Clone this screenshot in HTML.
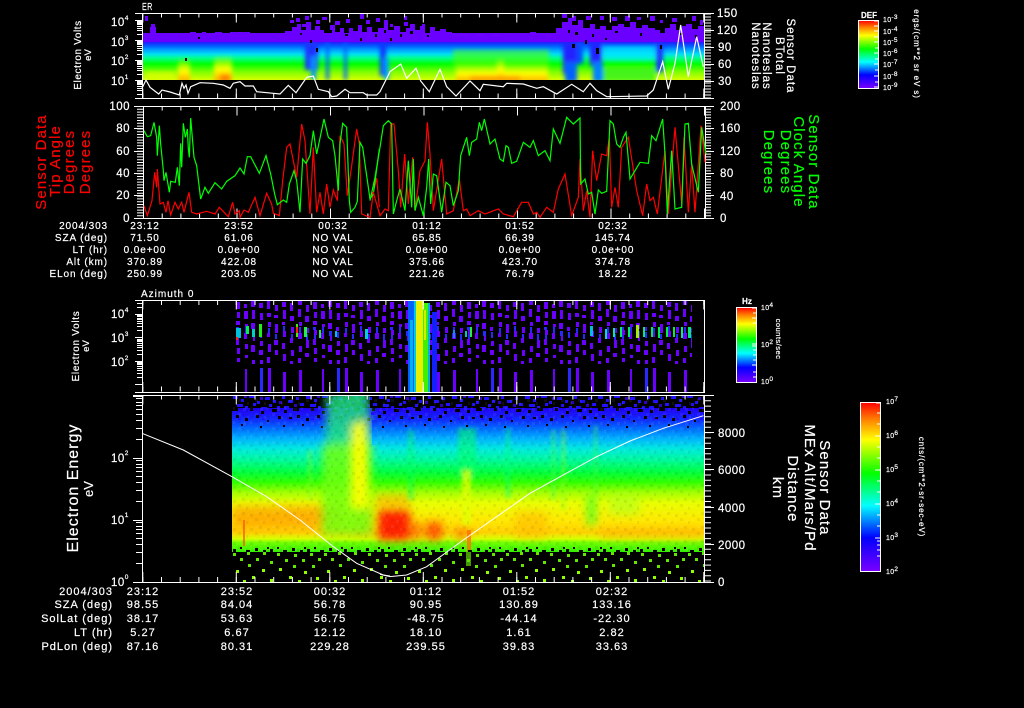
<!DOCTYPE html>
<html><head><meta charset="utf-8"><title>Sensor Data</title>
<style>
html,body{margin:0;padding:0;background:#000;width:1024px;height:708px;overflow:hidden}
svg{display:block}
text{fill:#fff;stroke:#fff;stroke-width:.2px;font-family:"Liberation Sans",sans-serif}
.s{font-size:10px;letter-spacing:.9px}
.b{font-size:11px;letter-spacing:1px}
.a{font-size:11.5px;letter-spacing:.5px}
.e{font-size:6.5px}
.c{font-size:7px;letter-spacing:.3px}
.l{font-size:15px;letter-spacing:1.1px}
text.r{fill:#ff0000;stroke:#ff0000}text.g{fill:#00ff00;stroke:#00ff00}
.w{stroke:#fff;fill:none;shape-rendering:crispEdges}
</style></head><body>
<svg width="1024" height="708" viewBox="0 0 1024 708" xmlns="http://www.w3.org/2000/svg">
<defs>
<linearGradient id="cb" x1="0" y1="0" x2="0" y2="1">
<stop offset="0" stop-color="#ff0000"/><stop offset=".1" stop-color="#ff8000"/><stop offset=".22" stop-color="#ffff00"/><stop offset=".42" stop-color="#00ff00"/><stop offset=".61" stop-color="#00ffff"/><stop offset=".8" stop-color="#0000ff"/><stop offset="1" stop-color="#7a00ff"/>
</linearGradient>
<linearGradient id="p1" gradientUnits="userSpaceOnUse" x1="0" y1="33" x2="0" y2="80">
<stop offset="0" stop-color="#6a00ff"/><stop offset=".16" stop-color="#6a10ff"/><stop offset=".2" stop-color="#2020ff"/><stop offset=".28" stop-color="#0060ff"/><stop offset=".36" stop-color="#00a0ff"/><stop offset=".45" stop-color="#00e0f0"/><stop offset=".53" stop-color="#00ff90"/><stop offset=".66" stop-color="#00ff00"/><stop offset=".83" stop-color="#80ff00"/><stop offset="1" stop-color="#d8ff00"/>
</linearGradient>
<linearGradient id="p4" gradientUnits="userSpaceOnUse" x1="0" y1="395" x2="0" y2="552">
<stop offset="0" stop-color="#1a10e0"/><stop offset=".085" stop-color="#2000f0"/><stop offset=".16" stop-color="#1030ff"/><stop offset=".216" stop-color="#0070ff"/><stop offset=".275" stop-color="#00b0ff"/><stop offset=".34" stop-color="#00e8e0"/><stop offset=".41" stop-color="#00f8a0"/><stop offset=".49" stop-color="#00ff40"/><stop offset=".555" stop-color="#30ff00"/><stop offset=".62" stop-color="#a0ff00"/><stop offset=".686" stop-color="#e8ff00"/><stop offset=".8" stop-color="#ffe800"/><stop offset=".875" stop-color="#ffd000"/><stop offset=".915" stop-color="#d8ff00"/><stop offset=".94" stop-color="#70ff00"/><stop offset="1" stop-color="#30f000"/>
</linearGradient>
<linearGradient id="hotv" x1="0" y1="0" x2="0" y2="1"><stop offset="0" stop-color="#ffff00" stop-opacity="0"/><stop offset=".55" stop-color="#ffff00"/><stop offset="1" stop-color="#ffa000"/></linearGradient>
<filter id="bl1" x="-50%" y="-50%" width="200%" height="200%"><feGaussianBlur stdDeviation="2.2"/></filter>
<filter id="bl3" x="-50%" y="-50%" width="200%" height="200%"><feGaussianBlur stdDeviation="4.5"/></filter>
<clipPath id="c1"><rect x="143" y="14" width="561" height="66"/></clipPath>
<clipPath id="c4"><rect x="232" y="396" width="472" height="156"/></clipPath>
<pattern id="topS" patternUnits="userSpaceOnUse" x="232" y="395" width="73" height="30">
<path fill="#2010ff" d="M1 1h5v3h-5zM9 4h3v3h-3zM17 0h6v3h-6zM25 6h3v3h-3zM33 2h5v3h-5zM41 5h3v3h-3zM5 9h6v3h-6zM13 11h3v3h-3zM21 8h3v3h-3zM29 12h6v3h-6zM37 9h3v3h-3zM45 11h3v3h-3zM2 15h3v3h-3zM10 18h6v3h-6zM18 15h3v3h-3zM26 19h3v3h-3zM34 16h6v3h-6zM42 18h3v3h-3zM6 23h3v3h-3zM14 22h3v3h-3zM22 25h6v3h-6zM30 23h3v3h-3zM38 26h3v3h-3zM46 24h2v3h-2zM50 1h3v3h-3zM56 5h5v3h-5zM64 2h3v3h-3zM68 8h4v3h-4zM52 11h5v3h-5zM60 14h3v3h-3zM66 17h5v3h-5zM49 19h3v3h-3zM55 22h6v3h-6zM63 25h3v3h-3z"/>
<path fill="#3000c0" d="M12 0h3v3h-3zM47 6h3v3h-3zM62 9h3v3h-3zM28 2h3v3h-3z"/>
</pattern>
<pattern id="blk" patternUnits="userSpaceOnUse" x="232" y="408" width="61" height="24">
<path fill="#000" d="M0 0h6v3h-6zM18 0h3v3h-3zM29 3h3v3h-3zM40 1h5v3h-5zM52 2h3v3h-3zM4 7h3v3h-3zM24 7h3v3h-3zM46 8h3v3h-3zM57 9h3v2h-3zM13 10h3v3h-3zM35 12h2v2h-2zM9 16h2v2h-2zM28 18h2v2h-2zM51 17h2v2h-2z"/>
</pattern>
<pattern id="grn" patternUnits="userSpaceOnUse" x="232" y="552" width="91" height="31">
<path fill="#60e800" d="M1 1h3v3h-3zM15 0h3v3h-3zM31 0h3v3h-3zM45 1h3v3h-3zM62 2h3v3h-3zM78 1h3v3h-3zM8 6h3v3h-3zM24 6h3v3h-3zM53 7h3v3h-3zM70 7h3v3h-3zM86 6h3v3h-3zM38 9h3v3h-3zM16 12h3v3h-3zM61 13h3v3h-3zM80 13h3v3h-3z"/>
<path fill="#90ff00" d="M4 18h3v3h-3zM30 17h3v3h-3zM47 16h3v3h-3zM72 19h3v3h-3zM20 24h3v3h-3zM57 24h3v3h-3zM38 27h3v4h-3zM84 25h3v3h-3zM11 28h3v3h-3zM66 28h3v3h-3z"/>
</pattern>
<pattern id="blk2" patternUnits="userSpaceOnUse" x="232" y="544" width="37" height="8">
<path fill="#000" d="M1 5h3v3h-3zM8 3h2v2h-2zM14 6h4v2h-4zM23 4h3v3h-3zM31 6h3v2h-3zM35 3h2v2h-2z"/>
</pattern>
<pattern id="tx" patternUnits="userSpaceOnUse" width="17" height="14">
<path fill="#000" fill-opacity=".06" d="M0 0h3v3h-3zM8 3h2v3h-2zM4 8h3v3h-3zM12 10h3v3h-3z"/><path fill="#fff" fill-opacity=".06" d="M5 2h3v3h-3zM12 1h2v3h-2zM0 7h3v3h-3zM9 10h2v3h-2z"/>
</pattern>
<pattern id="col" patternUnits="userSpaceOnUse" x="236" y="300" width="77" height="92">
<path fill="#6a00ff" d="M0 2h4v7h-4zM1 12h3v6h-3zM0 21h4v4h-4zM1 30h3v5h-3zM0 39h3v6h-3zM1 48h3v6h-3zM1 58h3v4h-3z
M8 4h3v4h-3zM8 11h4v8h-4zM9 24h3v3h-3zM8 33h3v6h-3zM9 44h3v5h-3zM9 55h3v3h-3zM9 69h2v23h-2z
M15 1h4v6h-4zM16 10h3v9h-3zM15 23h4v6h-4zM17 36h2v5h-2zM15 45h4v7h-4zM16 60h3v4h-3z
M23 3h4v5h-4zM24 13h3v7h-3zM23 27h3v4h-3zM24 41h3v5h-3zM23 50h4v5h-4zM24 60h3v4h-3z
M31 1h3v8h-3zM31 13h4v4h-4zM32 22h3v5h-3zM31 33h3v4h-3zM32 44h3v8h-3zM31 57h3v6h-3zM32 68h3v24h-3z
M39 5h3v6h-3zM38 15h4v3h-4zM39 24h3v9h-3zM38 40h4v5h-4zM39 50h3v5h-3z
M46 2h4v5h-4zM47 10h3v9h-3zM46 22h3v3h-3zM47 31h3v6h-3zM46 43h3v6h-3zM47 54h3v7h-3zM47 72h3v20h-3z
M54 3h3v8h-3zM54 16h4v5h-4zM55 27h3v6h-3zM54 38h3v5h-3zM55 50h3v6h-3zM54 61h3v3h-3z
M62 1h4v4h-4zM62 9h3v8h-3zM63 22h3v4h-3zM62 33h4v6h-4zM63 46h3v6h-3zM62 58h3v5h-3zM63 70h3v22h-3z
M70 5h3v7h-3zM69 16h4v6h-4zM70 28h3v5h-3zM70 40h3v8h-3zM69 53h4v4h-4z"/>
<path fill="#2828ff" d="M0 27h3v3h-3zM1 35h2v4h-2zM9 27h2v6h-2zM16 31h3v5h-3zM24 32h2v6h-2zM32 28h2v5h-2zM39 34h2v5h-2zM47 26h2v5h-2zM55 34h2v4h-2zM63 27h2v6h-2zM70 34h2v6h-2zM24 68h3v24h-3z"/>
</pattern>
</defs>
<rect width="1024" height="708" fill="#000"/>

<!-- panel 1 spectrogram -->
<g clip-path="url(#c1)">
<rect x="143" y="33" width="561" height="47" fill="url(#p1)"/>
<g filter="url(#bl1)">
<rect x="145" y="72" width="30" height="8" fill="#e0ff00" opacity=".7"/>
<rect x="178" y="58" width="12" height="24" fill="url(#hotv)"/>
<rect x="214" y="55" width="18" height="27" fill="url(#hotv)"/>
<rect x="220" y="74" width="10" height="8" fill="#ff8000"/>
<rect x="453" y="50" width="96" height="20" fill="#50ff00" opacity=".6"/>
<rect x="456" y="64" width="92" height="18" fill="url(#hotv)"/>
<rect x="497" y="58" width="7" height="24" fill="url(#hotv)"/>
<rect x="470" y="76" width="50" height="5" fill="#ff9000" opacity=".8"/>
<rect x="603" y="46" width="52" height="14" fill="#00e8ff" opacity=".7"/>
<rect x="603" y="68" width="52" height="14" fill="#30f020" opacity=".8"/>
<rect x="305" y="42" width="13" height="28" fill="#1a30ff"/>
<rect x="311" y="56" width="5" height="24" fill="#0090ff"/>
<rect x="326" y="42" width="3" height="38" fill="#0060ff"/>
<rect x="344" y="42" width="3" height="38" fill="#0060ff"/>
<rect x="380" y="42" width="6" height="34" fill="#1030ff"/>
<rect x="384" y="58" width="5" height="22" fill="#00a0ff"/>
<rect x="563" y="42" width="14" height="32" fill="#2020ff"/>
<rect x="565" y="62" width="12" height="20" fill="#0060ff"/>
<rect x="577" y="42" width="6" height="22" fill="#0050ff"/>
<rect x="590" y="42" width="12" height="24" fill="#2020ff"/>
<rect x="593" y="62" width="10" height="20" fill="#0080ff"/>
<rect x="656" y="42" width="7" height="30" fill="#1a30ff"/>
</g>
<path fill="#6a00ff" d="M143 42V35H150V27H156V33H162V35H190V32H196V35H202V32H206V35H215V32H222V35H230V32H250V35H258V33H270V35H275V33H285V31H292V27H297V24H301V30H306V22H311V30H315V26H320V30H324V33H330V25H335V32H340V28H344V33H349V28H353V31H358V25H362V32H367V27H372V32H378V28H384V24H388V30H394V26H400V32H406V28H410V24H415V30H420V26H425V33H430V27H435V31H440V29H446V32H452V36H470V34H475V36H485V34H492V36H500V33H505V35H514V33H520V35H530V32H536V35H545V36H550V33H556V28H562V22H568V18H572V25H578V20H583V28H590V24H595V29H600V26H606V30H612V26H618V24H624V27H630V22H636V28H642V25H648V28H655V30H660V33H665V28H670V24H676V30H682V26H686V24H692V29H698V26H704V42Z"/>
<path fill="#6a00ff" d="M145 16h3v5h-3zM151 24h4v4h-4zM290 20h4v3h-4zM296 18h4v4h-4zM305 16h4v4h-4zM302 24h4v3h-4zM316 20h4v4h-4zM322 17h5v3h-5zM335 21h5v4h-5zM346 19h4v4h-4zM360 14h4v5h-4zM366 20h4v4h-4zM376 18h4v4h-4zM384 20h4v4h-4zM390 24h3v3h-3zM404 16h3v4h-3zM404 22h4v4h-4zM422 24h3v3h-3zM562 14h5v4h-5zM572 16h4v5h-4zM586 16h5v4h-5zM600 16h4v4h-4zM612 17h5v4h-5zM625 16h5v5h-5zM637 17h4v3h-4zM650 16h5v5h-5zM660 20h3v3h-3zM672 18h5v4h-5zM692 16h4v5h-4zM700 20h3v5h-3z"/>
<path fill="#000" d="M185 58h2v3h-2zM310 40h2v3h-2zM316 48h2v4h-2zM360 38h2v3h-2zM384 30h2v3h-2zM568 30h2v3h-2zM572 44h3v4h-3zM585 40h2v4h-2zM596 48h3v6h-3zM605 38h2v2h-2zM660 45h2v4h-2zM390 38h2v3h-2zM400 34h2v3h-2zM300 33h2v2h-2zM330 30h2v3h-2zM345 34h3v2h-3zM375 34h2v3h-2zM410 31h3v3h-3zM427 35h2v2h-2zM575 32h3v3h-3zM592 34h2v3h-2zM615 31h3v2h-3zM640 33h2v3h-2zM680 33h3v2h-3zM695 35h2v3h-2zM198 37h2v2h-2z"/>
</g>

<!-- panel 1 axes -->
<path class="w" d="M135 13.5H714M135 98.5H714M142.5 13V99M704.5 13V99"/>
<path class="w" d="M135 80.5H142M135 60.5H142M135 40.5H142M135 20.5H142M137 74.5H142M137 70.5H142M137 68.5H142M137 66.5H142M137 64.5H142M137 63.5H142M137 62.5H142M137 61.5H142M137 54.5H142M137 50.5H142M137 48.5H142M137 46.5H142M137 44.5H142M137 43.5H142M137 42.5H142M137 41.5H142M137 34.5H142M137 30.5H142M137 28.5H142M137 26.5H142M137 24.5H142M137 23.5H142M137 22.5H142M137 21.5H142M137 94.5H142M137 90.5H142M137 88.5H142M137 86.5H142M137 84.5H142M137 83.5H142M137 82.5H142M137 81.5H142"/>
<line x1="708" y1="13.5" x2="708" y2="98" stroke="#fff" stroke-width="6" stroke-dasharray="1 2"/>
<path class="w" d="M704 13.5H714M704 30.5H714M704 47.5H714M704 64.5H714M704 81.5H714M704 98.5H714"/>
<g stroke="#fff">
<line x1="142.3" y1="15.5" x2="704" y2="15.5" stroke-width="4" stroke-dasharray="1 17.7"/>
<line x1="142.3" y1="96" x2="704" y2="96" stroke-width="5" stroke-dasharray="1 17.7"/>
<line x1="142.3" y1="18" x2="704" y2="18" stroke-width="9" stroke-dasharray="1 92.5"/>
<line x1="142.3" y1="93.5" x2="704" y2="93.5" stroke-width="10" stroke-dasharray="1 92.5"/>
</g>
<polyline fill="none" stroke="#fff" stroke-width="1.2" points="142,88.3 146,80 150,87.3 158.7,94 162,90 170,92 179.3,95 182,83.3 184,88.3 186,85 188,93.3 190.7,86.7 200,82.7 213.3,83.3 223.3,85 230,88.3 233.3,83.3 240,81.7 245,86 253.3,86 256.7,91.7 273.3,93.3 280,94 288.3,85.3 296,92.7 306.7,77.3 313.3,76 318.3,89.3 328.3,91.7 331.7,96.7 336.7,96 345,89.3 350,92.7 363.3,92.7 366.7,95 376.7,95 380,91.7 390,71.7 400.7,64 406.7,78.3 416,68.3 420.7,81 429.3,91.7 440,69.3 446.7,86.7 456,96 470,81 480,90.7 483.3,84.3 503.3,86.7 506.7,83.3 523.3,84 536.7,88.3 543.3,86.7 556.7,94 571.7,84.3 583.3,91.7 590,83.3 596.7,90.7 606.7,96.7 646.7,96 653.3,90 662.7,61.7 668.3,89.3 675,63.3 680.7,25 688.3,76.7 696.7,36.7 703.3,66.7"/>
<text x="142" y="10" class="s" textLength="11" lengthAdjust="spacingAndGlyphs">ER</text>
<g class="a">
<text x="111" y="26">10<tspan class="e" dy="-6">4</tspan></text>
<text x="111" y="46">10<tspan class="e" dy="-6">3</tspan></text>
<text x="111" y="65">10<tspan class="e" dy="-6">2</tspan></text>
<text x="111" y="85">10<tspan class="e" dy="-6">1</tspan></text>
<text x="717" y="17">150</text><text x="717" y="34">120</text><text x="718" y="51">90</text><text x="718" y="68">60</text><text x="718" y="85">30</text>
</g>
<text transform="translate(81,55) rotate(-90)" text-anchor="middle" font-size="10" letter-spacing=".6">Electron Volts</text>
<text transform="translate(91,55) rotate(-90)" text-anchor="middle" font-size="9.5">eV</text>
<text transform="translate(787,56) rotate(90)" text-anchor="middle" font-size="11.5" letter-spacing="1">Sensor Data</text>
<text transform="translate(776,56) rotate(90)" text-anchor="middle" font-size="11.5" letter-spacing="1">BTotal</text>
<text transform="translate(763,56) rotate(90)" text-anchor="middle" font-size="11.5" letter-spacing="1">Nanoteslas</text>
<text transform="translate(752,56) rotate(90)" text-anchor="middle" font-size="11.5" letter-spacing="1">Nanoteslas</text>

<!-- colorbar 1 -->
<rect x="858.5" y="20.5" width="20" height="68" fill="url(#cb)" stroke="#fff"/>
<path class="w" d="M874 21H878M874 26H878M874 31H878M874 37H878M874 42H878M875 48H878M874 53H878M875 59H878M874 64H878M875 70H878M874 76H878M875 82H878M874 87H878"/>
<text x="861" y="18" font-size="8.5" font-weight="bold" textLength="16" lengthAdjust="spacingAndGlyphs">DEF</text>
<g class="c">
<text x="883" y="22">10<tspan class="e" font-size="5" dy="-3">-3</tspan></text>
<text x="883" y="34">10<tspan class="e" dy="-3">-4</tspan></text>
<text x="883" y="45">10<tspan class="e" dy="-3">-5</tspan></text>
<text x="883" y="56">10<tspan class="e" dy="-3">-6</tspan></text>
<text x="883" y="67">10<tspan class="e" dy="-3">-7</tspan></text>
<text x="883" y="79">10<tspan class="e" dy="-3">-8</tspan></text>
<text x="883" y="90">10<tspan class="e" dy="-3">-9</tspan></text>
</g>
<text transform="translate(914,54) rotate(90)" text-anchor="middle" font-size="8" letter-spacing=".9">ergs/(cm**2 sr eV s)</text>

<!-- panel 2 -->
<path class="w" d="M134 106.5H714M134 218.5H714M143.5 106V219M705.5 106V219"/>
<line x1="140" y1="106" x2="140" y2="218" stroke="#fff" stroke-width="6" stroke-dasharray="1 1.8"/>
<line x1="708" y1="106" x2="708" y2="218" stroke="#fff" stroke-width="6" stroke-dasharray="1 1.8"/>
<path class="w" d="M134 128.5H143M134 151.5H143M134 173.5H143M134 195.5H143M705 128.5H714M705 151.5H714M705 173.5H714M705 195.5H714"/>
<g stroke="#fff">
<line x1="143" y1="108.5" x2="705" y2="108.5" stroke-width="4" stroke-dasharray="1 17.7"/>
<line x1="143" y1="216" x2="705" y2="216" stroke-width="5" stroke-dasharray="1 17.7"/>
<line x1="143" y1="111" x2="705" y2="111" stroke-width="9" stroke-dasharray="1 92.5"/>
<line x1="143" y1="213.5" x2="705" y2="213.5" stroke-width="10" stroke-dasharray="1 92.5"/>
</g>
<g fill="none" stroke-width="3.6">
<g transform="translate(140,104) scale(.33333)">
<polyline stroke="#ff0000" points="12,305 22,335 36,290 44,205 50,250 52,195 60,300 70,295 78,325 84,290 92,333 105,295 115,315 125,295 132,325 147,265 155,325 170,330 200,322 225,330 238,310 265,338 278,295 285,330 298,320 300,340 312,318 325,325 345,280 360,335 380,268 395,300 400,328 418,335 428,230 440,130 450,120 470,220 485,60 495,110 510,330 520,130 530,325 540,265 550,330 560,240 570,310 580,258 592,290 600,95 612,120 622,275 635,185 650,75 658,120 665,330 690,340 700,265 710,222 718,310"/>
<polyline stroke="#00ff00" points="12,80 22,98 32,95 42,55 50,100 52,155 58,65 62,120 70,200 72,230 78,205 88,265 92,232 106,235 112,190 118,245 122,118 125,190 130,58 136,100 142,75 145,135 148,160 152,42 162,160 170,185 182,285 195,250 205,268 225,236 245,255 260,232 285,215 300,192 312,210 322,158 332,158 358,208 378,155 392,210 404,270 412,302 430,288 440,295 448,240 462,200 470,230 480,325 488,165 498,178 510,155 520,80 530,150 552,45 565,100 578,110 585,155 595,260 600,120 608,58 620,70 628,290 632,325 645,310 652,292 660,115 668,130 680,215 690,285 700,270 718,135"/>
</g>
<g transform="translate(370,104) scale(.33333)">
<polyline stroke="#ff0000" points="0,275 10,265 30,335 45,315 55,320 62,60 72,60 85,200 92,310 104,150 115,300 128,160 135,320 150,200 165,170 172,55 180,150 190,320 215,165 230,330 250,320 268,225 280,320 290,315 300,335 325,320 345,330 385,315 400,330 430,338 455,295 475,295 490,330 500,325 510,340 530,310 550,325 565,255 585,210 605,335 625,280 630,165 640,320 650,260 660,340 668,140 680,230 695,150 710,155 718,100 725,310 735,250 745,310 755,130 775,100 800,260 818,335 830,240 840,290 850,280 862,330 885,140 895,330 915,70 935,300 942,100 955,325 965,180 975,325 993,65 1005,175"/>
<polyline stroke="#00ff00" points="0,290 15,220 30,130 40,65 55,50 65,60 70,330 80,290 90,255 105,320 115,170 125,310 130,165 135,320 145,280 160,335 170,250 176,165 182,300 190,210 200,215 215,325 228,235 240,245 250,305 265,260 272,155 290,100 298,155 305,115 320,105 328,55 335,80 343,45 360,120 375,105 390,165 400,172 408,125 415,130 425,178 440,172 460,115 480,130 490,110 505,155 525,140 540,170 550,75 570,118 590,40 610,60 630,42 632,240 645,225 655,270 665,265 675,330 685,258 695,268 710,262 720,50 730,60 740,120 750,130 760,100 768,85 780,225 810,175 835,178 845,95 858,110 878,45 885,150 892,330 905,140 915,315 935,310 945,60 955,58 965,180 985,265 995,70 1008,150"/>
</g>
</g>
<g class="a">
<text x="130" y="110" text-anchor="end">100</text><text x="130" y="132" text-anchor="end">80</text><text x="130" y="155" text-anchor="end">60</text><text x="130" y="177" text-anchor="end">40</text><text x="130" y="199" text-anchor="end">20</text><text x="130" y="222" text-anchor="end">0</text>
<text x="720" y="110">200</text><text x="720" y="132">160</text><text x="720" y="155">120</text><text x="720" y="177">80</text><text x="720" y="200">40</text><text x="720" y="222">0</text>
</g>
<g class="l">
<text class="r" transform="translate(46,162) rotate(-90)" text-anchor="middle">Sensor Data</text>
<text class="r" transform="translate(60,161) rotate(-90)" text-anchor="middle">Tip Angle</text>
<text class="r" transform="translate(74,162) rotate(-90)" text-anchor="middle">Degrees</text>
<text class="r" transform="translate(90,162) rotate(-90)" text-anchor="middle">Degrees</text>
<text class="g" transform="translate(809,162) rotate(90)" text-anchor="middle">Sensor Data</text>
<text class="g" transform="translate(794,162) rotate(90)" text-anchor="middle">Clock Angle</text>
<text class="g" transform="translate(781,162) rotate(90)" text-anchor="middle">Degrees</text>
<text class="g" transform="translate(764,162) rotate(90)" text-anchor="middle">Degrees</text>
</g>

<!-- table 1 -->
<g class="s" text-anchor="end">
<text x="108" y="229">2004/303</text><text x="108" y="241">SZA (deg)</text><text x="108" y="253">LT (hr)</text><text x="108" y="265">Alt (km)</text><text x="108" y="277">ELon (deg)</text>
</g>
<g class="s" text-anchor="middle">
<text x="145" y="229">23:12</text><text x="239" y="229">23:52</text><text x="333" y="229">00:32</text><text x="427" y="229">01:12</text><text x="520" y="229">01:52</text><text x="613" y="229">02:32</text>
<text x="145" y="241">71.50</text><text x="239" y="241">61.06</text><text x="333" y="241">NO VAL</text><text x="427" y="241">65.85</text><text x="520" y="241">66.39</text><text x="613" y="241">145.74</text>
<text x="145" y="253">0.0e+00</text><text x="239" y="253">0.0e+00</text><text x="333" y="253">NO VAL</text><text x="427" y="253">0.0e+00</text><text x="520" y="253">0.0e+00</text><text x="613" y="253">0.0e+00</text>
<text x="145" y="265">370.89</text><text x="239" y="265">422.08</text><text x="333" y="265">NO VAL</text><text x="427" y="265">375.66</text><text x="520" y="265">423.70</text><text x="613" y="265">374.78</text>
<text x="145" y="277">250.99</text><text x="239" y="277">203.05</text><text x="333" y="277">NO VAL</text><text x="427" y="277">221.26</text><text x="520" y="277">76.79</text><text x="613" y="277">18.22</text>
</g>

<!-- panel 3 -->
<rect x="236" y="300" width="456" height="92" fill="url(#col)"/>
<g>
<rect x="236" y="328" width="5" height="10" fill="#00c0e0"/><rect x="236" y="337" width="2" height="3" fill="#ff2020"/>
<rect x="246" y="326" width="3" height="8" fill="#00f060"/><rect x="252" y="329" width="3" height="8" fill="#00d0c0"/><rect x="259" y="324" width="3" height="13" fill="#20f020"/>
<rect x="296" y="324" width="2" height="13" fill="#40f000"/><rect x="296" y="327" width="2" height="6" fill="#ff2000"/>
<rect x="304" y="327" width="3" height="10" fill="#20f040"/><rect x="319" y="330" width="2" height="8" fill="#20f040"/><rect x="335" y="331" width="2" height="6" fill="#00c0e0"/><rect x="365" y="329" width="3" height="10" fill="#00d0e0"/>
<rect x="408" y="301" width="6" height="91" fill="#0060ff"/><rect x="410" y="320" width="3" height="72" fill="#00b0e8"/>
<rect x="414" y="301" width="2" height="91" fill="#00c8e0"/>
<rect x="416" y="301" width="7" height="91" fill="#e8f000"/><rect x="423" y="303" width="5" height="89" fill="#40f000"/><rect x="424" y="310" width="2" height="30" fill="#d0f000"/>
<rect x="428" y="303" width="2" height="89" fill="#00b0e0"/><rect x="432" y="312" width="5" height="80" fill="#1020ff"/>
<rect x="453" y="330" width="2" height="8" fill="#0090ff"/><rect x="465" y="331" width="2" height="6" fill="#00c8c0"/><rect x="470" y="327" width="2" height="10" fill="#20f040"/>
<rect x="590" y="326" width="3" height="10" fill="#00c0e0"/><rect x="605" y="329" width="2" height="10" fill="#00e0c0"/><rect x="613" y="328" width="2" height="9" fill="#00f090"/><rect x="620" y="327" width="2" height="10" fill="#00f060"/><rect x="628" y="327" width="2" height="10" fill="#00f060"/><rect x="636" y="325" width="3" height="13" fill="#a0f000"/><rect x="643" y="327" width="2" height="10" fill="#00f060"/><rect x="651" y="327" width="2" height="10" fill="#00f040"/><rect x="658" y="327" width="2" height="11" fill="#00f040"/><rect x="666" y="327" width="2" height="10" fill="#00f040"/><rect x="673" y="327" width="2" height="10" fill="#00f040"/><rect x="681" y="327" width="2" height="11" fill="#00f080"/><rect x="688" y="327" width="3" height="11" fill="#00f060"/>
</g>
<path class="w" d="M135 300.5H704M135 392.5H704M142.5 300V393M704.5 300V393"/>
<path class="w" d="M135 361.5H142M135 337.5H142M135 314.5H142M135 384.5H142M137 377.5H142M137 373.5H142M137 370.5H142M137 368.5H142M137 366.5H142M137 364.5H142M137 363.5H142M137 362.5H142M137 354.5H142M137 350.5H142M137 347.5H142M137 345.5H142M137 343.5H142M137 341.5H142M137 340.5H142M137 339.5H142M137 330.5H142M137 326.5H142M137 323.5H142M137 321.5H142M137 319.5H142M137 318.5H142M137 316.5H142M137 315.5H142M137 307.5H142M137 303.5H142"/>
<g stroke="#fff">
<line x1="142.3" y1="303" x2="704" y2="303" stroke-width="4" stroke-dasharray="1 17.7"/>
<line x1="142.3" y1="389" x2="704" y2="389" stroke-width="5" stroke-dasharray="1 17.7"/>
<line x1="142.3" y1="305" x2="704" y2="305" stroke-width="9" stroke-dasharray="1 92.5"/>
<line x1="142.3" y1="387" x2="704" y2="387" stroke-width="10" stroke-dasharray="1 92.5"/>
</g>
<text x="141" y="297" font-size="10" letter-spacing="1">Azimuth 0</text>
<g class="a">
<text x="111" y="318">10<tspan class="e" dy="-6">4</tspan></text>
<text x="111" y="342">10<tspan class="e" dy="-6">3</tspan></text>
<text x="111" y="366">10<tspan class="e" dy="-6">2</tspan></text>
</g>
<text transform="translate(79,346) rotate(-90)" text-anchor="middle" font-size="10" letter-spacing=".7">Electron Volts</text>
<text transform="translate(89,346) rotate(-90)" text-anchor="middle" font-size="9.5">eV</text>

<!-- colorbar 2 -->
<rect x="736.5" y="307.5" width="20" height="75" fill="url(#cb)" stroke="#fff"/>
<path class="w" d="M752 308H756M753 313H756M752 318H756M753 323H756M752 344H756M752 346H756M753 350H756M753 355H756M753 360H756M752 365H756M753 372H756M753 377H756"/>
<text x="742" y="304" font-size="8.5" font-weight="bold" textLength="10" lengthAdjust="spacingAndGlyphs">Hz</text>
<g class="c">
<text x="761" y="310">10<tspan class="e" dy="-3">4</tspan></text>
<text x="761" y="347">10<tspan class="e" dy="-3">2</tspan></text>
<text x="761" y="384">10<tspan class="e" dy="-3">0</tspan></text>
</g>
<text transform="translate(776,339) rotate(90)" text-anchor="middle" font-size="7.5" letter-spacing=".5">counts/sec</text>

<!-- panel 4 spectrogram -->
<g clip-path="url(#c4)">
<rect x="232" y="395" width="472" height="157" fill="url(#p4)"/>
<g filter="url(#bl3)">
<rect x="232" y="506" width="108" height="22" fill="#ff9000" opacity=".65"/>
<rect x="355" y="505" width="16" height="30" fill="#ffb000" opacity=".6"/>
<rect x="378" y="510" width="32" height="30" fill="#ff2000"/>
<rect x="375" y="495" width="35" height="12" fill="#ffa000" opacity=".6"/>
<rect x="413" y="522" width="7" height="18" fill="#ff6000"/>
<rect x="426" y="522" width="16" height="18" fill="#ff4000" opacity=".85"/>
<rect x="455" y="528" width="14" height="12" fill="#ff8000" opacity=".8"/>
<rect x="515" y="512" width="32" height="26" fill="#ffc000" opacity=".7"/>
<rect x="600" y="530" width="104" height="8" fill="#ffb000" opacity=".7"/>
<rect x="587" y="495" width="9" height="30" fill="#40ff20" opacity=".8"/>
<rect x="609" y="495" width="30" height="20" fill="#a0ff20" opacity=".5"/>
</g>
<g filter="url(#bl1)">
<rect x="408" y="430" width="6" height="70" fill="#00ff60" opacity=".45"/>
<rect x="458" y="428" width="18" height="50" fill="#00ff60" opacity=".55"/>
<rect x="462" y="470" width="9" height="55" fill="#e0ff00" opacity=".8"/>
<rect x="506" y="428" width="4" height="70" fill="#00ff80" opacity=".55"/>
<rect x="552" y="430" width="3" height="70" fill="#40ff40" opacity=".6"/>
<rect x="562" y="430" width="3" height="80" fill="#80ff20" opacity=".6"/>
<rect x="594" y="425" width="3" height="70" fill="#40ff40" opacity=".5"/>
<rect x="308" y="450" width="4" height="50" fill="#80ff20" opacity=".5"/>
</g>
<rect x="232" y="395" width="472" height="13" fill="#000"/>
<rect x="232" y="395" width="472" height="25" fill="url(#topS)"/>
<rect x="232" y="408" width="472" height="24" fill="url(#blk)"/>
<g filter="url(#bl3)">
<polygon points="326,395 368,385 372,445 326,450" fill="#20e080" opacity=".85"/>
<polygon points="322,445 372,440 372,535 322,535" fill="#70ff10" opacity=".85"/>
<polygon points="352,425 366,420 368,508 352,508" fill="#f8ff00"/>
</g>
<rect x="370" y="395" width="14" height="13" fill="#000"/>
<rect x="370" y="395" width="14" height="25" fill="url(#topS)"/>
<rect x="372" y="420" width="5" height="25" fill="url(#p4)"/>
<rect x="232" y="395" width="472" height="157" fill="url(#tx)"/>
<rect x="467" y="530" width="4" height="22" fill="#ff7000" opacity=".8"/>
<rect x="243" y="520" width="2" height="26" fill="#ff6000" opacity=".8"/>
<rect x="232" y="544" width="472" height="8" fill="url(#blk2)"/>
</g>
<rect x="232" y="552" width="472" height="30" fill="url(#grn)"/>
<rect x="466" y="552" width="5" height="14" fill="#60e000" opacity=".7"/>

<path class="w" d="M133 395.5H714M133 582.5H714M142.5 395V583M704.5 395V583"/>
<path class="w" d="M133 520.5H142M133 458.5H142M133 396.5H142M136 563.5H142M136 552.5H142M136 544.5H142M136 538.5H142M136 533.5H142M136 529.5H142M136 526.5H142M136 522.5H142M136 501.5H142M136 490.5H142M136 482.5H142M136 476.5H142M136 471.5H142M136 467.5H142M136 464.5H142M136 460.5H142M136 439.5H142M136 428.5H142M136 420.5H142M136 414.5H142M136 409.5H142M136 405.5H142M136 402.5H142M136 398.5H142"/>
<line x1="708" y1="395" x2="708" y2="582" stroke="#fff" stroke-width="6" stroke-dasharray="1 4.3"/>
<path class="w" d="M704 432.5H714M704 469.5H714M704 507.5H714M704 544.5H714"/>
<g stroke="#fff">
<line x1="142.3" y1="397.5" x2="704" y2="397.5" stroke-width="4" stroke-dasharray="1 17.7"/>
<line x1="142.3" y1="579.5" x2="704" y2="579.5" stroke-width="5" stroke-dasharray="1 17.7"/>
<line x1="142.3" y1="400" x2="704" y2="400" stroke-width="9" stroke-dasharray="1 92.5"/>
<line x1="142.3" y1="577" x2="704" y2="577" stroke-width="10" stroke-dasharray="1 92.5"/>
</g>
<g fill="none" stroke="#fff" stroke-width="3">
<polyline transform="translate(50,395) scale(.33333)" points="276,115 400,165 546,245 650,305 750,375 850,455 920,505 1000,540 1020,543"/>
<polyline transform="translate(380,395) scale(.33333)" points="0,538 30,545 80,540 140,515 250,435 350,365 450,295 550,240 650,185 750,138 850,100 970,62"/>
</g>
<g class="a">
<text x="111" y="462">10<tspan class="e" dy="-7">2</tspan></text>
<text x="111" y="524">10<tspan class="e" dy="-7">1</tspan></text>
<text x="111" y="586">10<tspan class="e" dy="-7">0</tspan></text>
<text x="718" y="437">8000</text><text x="718" y="474">6000</text><text x="718" y="512">4000</text><text x="718" y="549">2000</text><text x="718" y="586">0</text>
</g>
<text transform="translate(78,488) rotate(-90)" text-anchor="middle" font-size="16" letter-spacing="1">Electron Energy</text>
<text transform="translate(93,489) rotate(-90)" text-anchor="middle" font-size="13">eV</text>
<g font-size="15" letter-spacing="1.1">
<text transform="translate(820,488) rotate(90)" text-anchor="middle">Sensor Data</text>
<text transform="translate(805,488) rotate(90)" text-anchor="middle">MEx Alt/Mars/Pd</text>
<text transform="translate(788,489) rotate(90)" text-anchor="middle">Distance</text>
<text transform="translate(773,488) rotate(90)" text-anchor="middle">km</text>
</g>

<!-- colorbar 3 -->
<rect x="860.5" y="402.5" width="20" height="169" fill="url(#cb)" stroke="#fff"/>
<path class="w" d="M876 403H880M877 413H880M877 424H880M875 436H880M877 447H880M877 458H880M875 470H880M877 481H880M877 492H880M875 504H880M877 515H880M877 526H880M875 538H880M877 541H880M877 545H880M877 550H880M877 556H880"/>
<g class="c">
<text x="886" y="404">10<tspan class="e" dy="-3">7</tspan></text>
<text x="886" y="438">10<tspan class="e" dy="-3">6</tspan></text>
<text x="886" y="472">10<tspan class="e" dy="-3">5</tspan></text>
<text x="886" y="506">10<tspan class="e" dy="-3">4</tspan></text>
<text x="886" y="540">10<tspan class="e" dy="-3">3</tspan></text>
<text x="886" y="574">10<tspan class="e" dy="-3">2</tspan></text>
</g>
<text transform="translate(919,487) rotate(90)" text-anchor="middle" font-size="8" letter-spacing=".9">cnts/(cm**2-sr-sec-eV)</text>

<!-- table 2 -->
<g class="b" text-anchor="end">
<text x="113" y="595">2004/303</text><text x="113" y="608">SZA (deg)</text><text x="113" y="622">SolLat (deg)</text><text x="113" y="636">LT (hr)</text><text x="113" y="650">PdLon (deg)</text>
</g>
<g class="b" text-anchor="middle">
<text x="143" y="595">23:12</text><text x="237" y="595">23:52</text><text x="330" y="595">00:32</text><text x="426" y="595">01:12</text><text x="519" y="595">01:52</text><text x="612" y="595">02:32</text>
<text x="143" y="608">98.55</text><text x="237" y="608">84.04</text><text x="330" y="608">56.78</text><text x="426" y="608">90.95</text><text x="519" y="608">130.89</text><text x="612" y="608">133.16</text>
<text x="143" y="622">38.17</text><text x="237" y="622">53.63</text><text x="330" y="622">56.75</text><text x="426" y="622">-48.75</text><text x="519" y="622">-44.14</text><text x="612" y="622">-22.30</text>
<text x="143" y="636">5.27</text><text x="237" y="636">6.67</text><text x="330" y="636">12.12</text><text x="426" y="636">18.10</text><text x="519" y="636">1.61</text><text x="612" y="636">2.82</text>
<text x="143" y="650">87.16</text><text x="237" y="650">80.31</text><text x="330" y="650">229.28</text><text x="426" y="650">239.55</text><text x="519" y="650">39.83</text><text x="612" y="650">33.63</text>
</g>
</svg>
</body></html>
